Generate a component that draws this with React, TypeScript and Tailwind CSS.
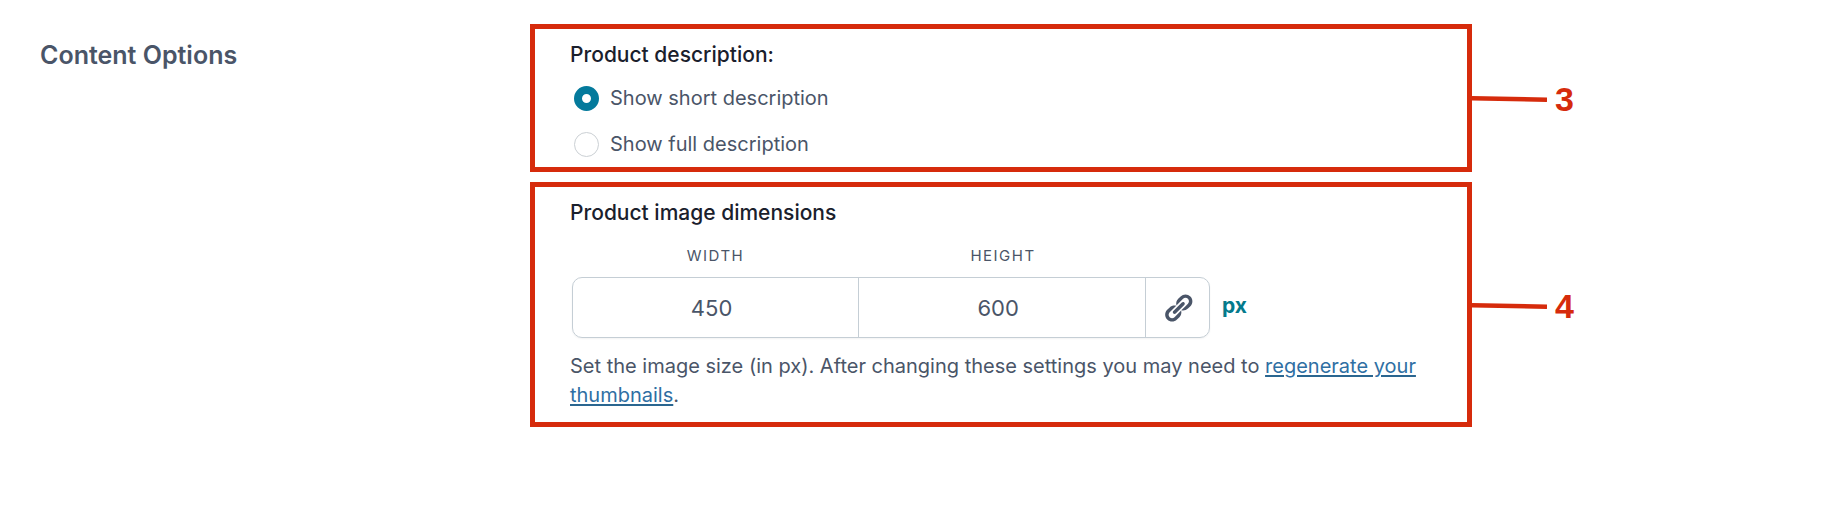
import { useState } from "react";
import type { ReactNode } from "react";

function LinkIcon() {
  return (
    <svg viewBox="0 0 20 20" className="size-8" fill="currentColor" aria-hidden="true">
      <path d="M17.74 2.76c1.68 1.69 1.68 4.41 0 6.1l-1.53 1.52c-1.12 1.12-2.7 1.47-4.14 1.09l2.62-2.61.76-.77.76-.76c.84-.84.84-2.2 0-3.04-.84-.85-2.2-.85-3.04 0l-.77.76-3.38 3.38c-.37-1.44-.02-3.02 1.1-4.14l1.52-1.53c1.69-1.68 4.42-1.68 6.1 0zM8.59 13.43l5.34-5.34c.42-.42.42-1.1 0-1.52-.44-.43-1.13-.39-1.53 0l-5.33 5.34c-.42.42-.42 1.1 0 1.52.44.43 1.13.39 1.52 0zm-.76 2.29l4.14-4.15c.38 1.44.03 3.02-1.09 4.14l-1.52 1.53c-1.69 1.68-4.41 1.68-6.1 0-1.68-1.68-1.68-4.42 0-6.1l1.53-1.52c1.12-1.12 2.7-1.47 4.14-1.1l-4.14 4.15c-.85.84-.85 2.2 0 3.05.84.84 2.2.84 3.04 0z" />
    </svg>
  );
}

function Callout({ label, children }: { label: string; children: ReactNode }) {
  return (
    <div className="grid grid-cols-[942fr_362fr] items-center">
      <div className="border-[5px] border-[#d62b0c] pr-6 pl-[35px]">{children}</div>
      <div className="flex items-center gap-2 pt-0.5 text-[#d62b0c]">
        <svg width="75" height="8" viewBox="0 0 75 8" aria-hidden="true">
          <path d="M0 3.3 75 4.7" stroke="currentColor" strokeWidth="4.6" />
        </svg>
        <span className="font-['Liberation_Sans',Arial,sans-serif] text-[34px] leading-8 font-bold">{label}</span>
      </div>
    </div>
  );
}

function RadioOption({
  label,
  checked,
  onChange,
}: {
  label: string;
  checked: boolean;
  onChange: () => void;
}) {
  return (
    <label className="flex h-[46px] items-center gap-[11px] pl-1">
      <input
        type="radio"
        name="product-description"
        checked={checked}
        onChange={onChange}
        className="size-[25px] shrink-0 appearance-none rounded-full border border-[#cbd0d4] bg-white checked:border-8 checked:border-[#047a9c]"
      />
      <span>{label}</span>
    </label>
  );
}

export default function App() {
  const [mode, setMode] = useState("short");
  const [width, setWidth] = useState("450");
  const [height, setHeight] = useState("600");
  const [linked, setLinked] = useState(true);

  const title = "block pt-[11px] text-[21px] leading-[30px] font-medium text-[#1a202c]";
  const field =
    "h-[59px] w-full min-w-0 border-r border-[#c5ced5] bg-transparent pr-2 text-center text-[22px] outline-none";

  return (
    <main className="grid grid-cols-[490fr_1304fr] bg-white pt-6 pb-20 pl-10 font-[Inter,sans-serif] text-xl text-[#4a5568]">
      <h2 className="pt-[15px] text-[25px] leading-8 font-semibold">Content Options</h2>
      <div className="flex flex-col gap-2.5">
        <Callout label="3">
          <fieldset>
            <legend className="contents">
              <span className={title}>Product description:</span>
            </legend>
            <div className="pt-[5px]">
              <RadioOption label="Show short description" checked={mode === "short"} onChange={() => setMode("short")} />
              <RadioOption label="Show full description" checked={mode === "full"} onChange={() => setMode("full")} />
            </div>
          </fieldset>
        </Callout>

        <Callout label="4">
          <h3 className={title}>Product image dimensions</h3>
          <div className="ml-0.5 grid max-w-[638px] grid-cols-[287fr_288fr_63fr] pt-[18px] text-center text-[15px] leading-5 tracking-widest uppercase">
            <label htmlFor="image-width">Width</label>
            <label htmlFor="image-height">Height</label>
          </div>
          <div className="ml-0.5 flex items-center gap-3 pt-[11px]">
            <div className="grid w-full max-w-[638px] grid-cols-[287fr_288fr_63fr] rounded-[10px] border border-[#c5ced5] shadow-xs">
              <input
                id="image-width"
                type="text"
                inputMode="numeric"
                value={width}
                onChange={(e) => setWidth(e.target.value)}
                className={field}
              />
              <input
                id="image-height"
                type="text"
                inputMode="numeric"
                value={height}
                onChange={(e) => setHeight(e.target.value)}
                className={field}
              />
              <button
                type="button"
                aria-label="Link width and height"
                aria-pressed={linked}
                onClick={() => setLinked(!linked)}
                className="flex items-center justify-center"
              >
                <LinkIcon />
              </button>
            </div>
            <span className="pb-1 text-[21px] font-bold text-[#047a8c]">px</span>
          </div>
          <p className="pt-3.5 pb-3 leading-[29px]">
            Set the image size (in px). After changing these settings you may need to{" "}
            <a
              href="#regenerate-thumbnails"
              className="text-[#2f6fa3] underline decoration-[#2a6690] decoration-2 underline-offset-2"
            >
              regenerate your thumbnails
            </a>
            .
          </p>
        </Callout>
      </div>
    </main>
  );
}
